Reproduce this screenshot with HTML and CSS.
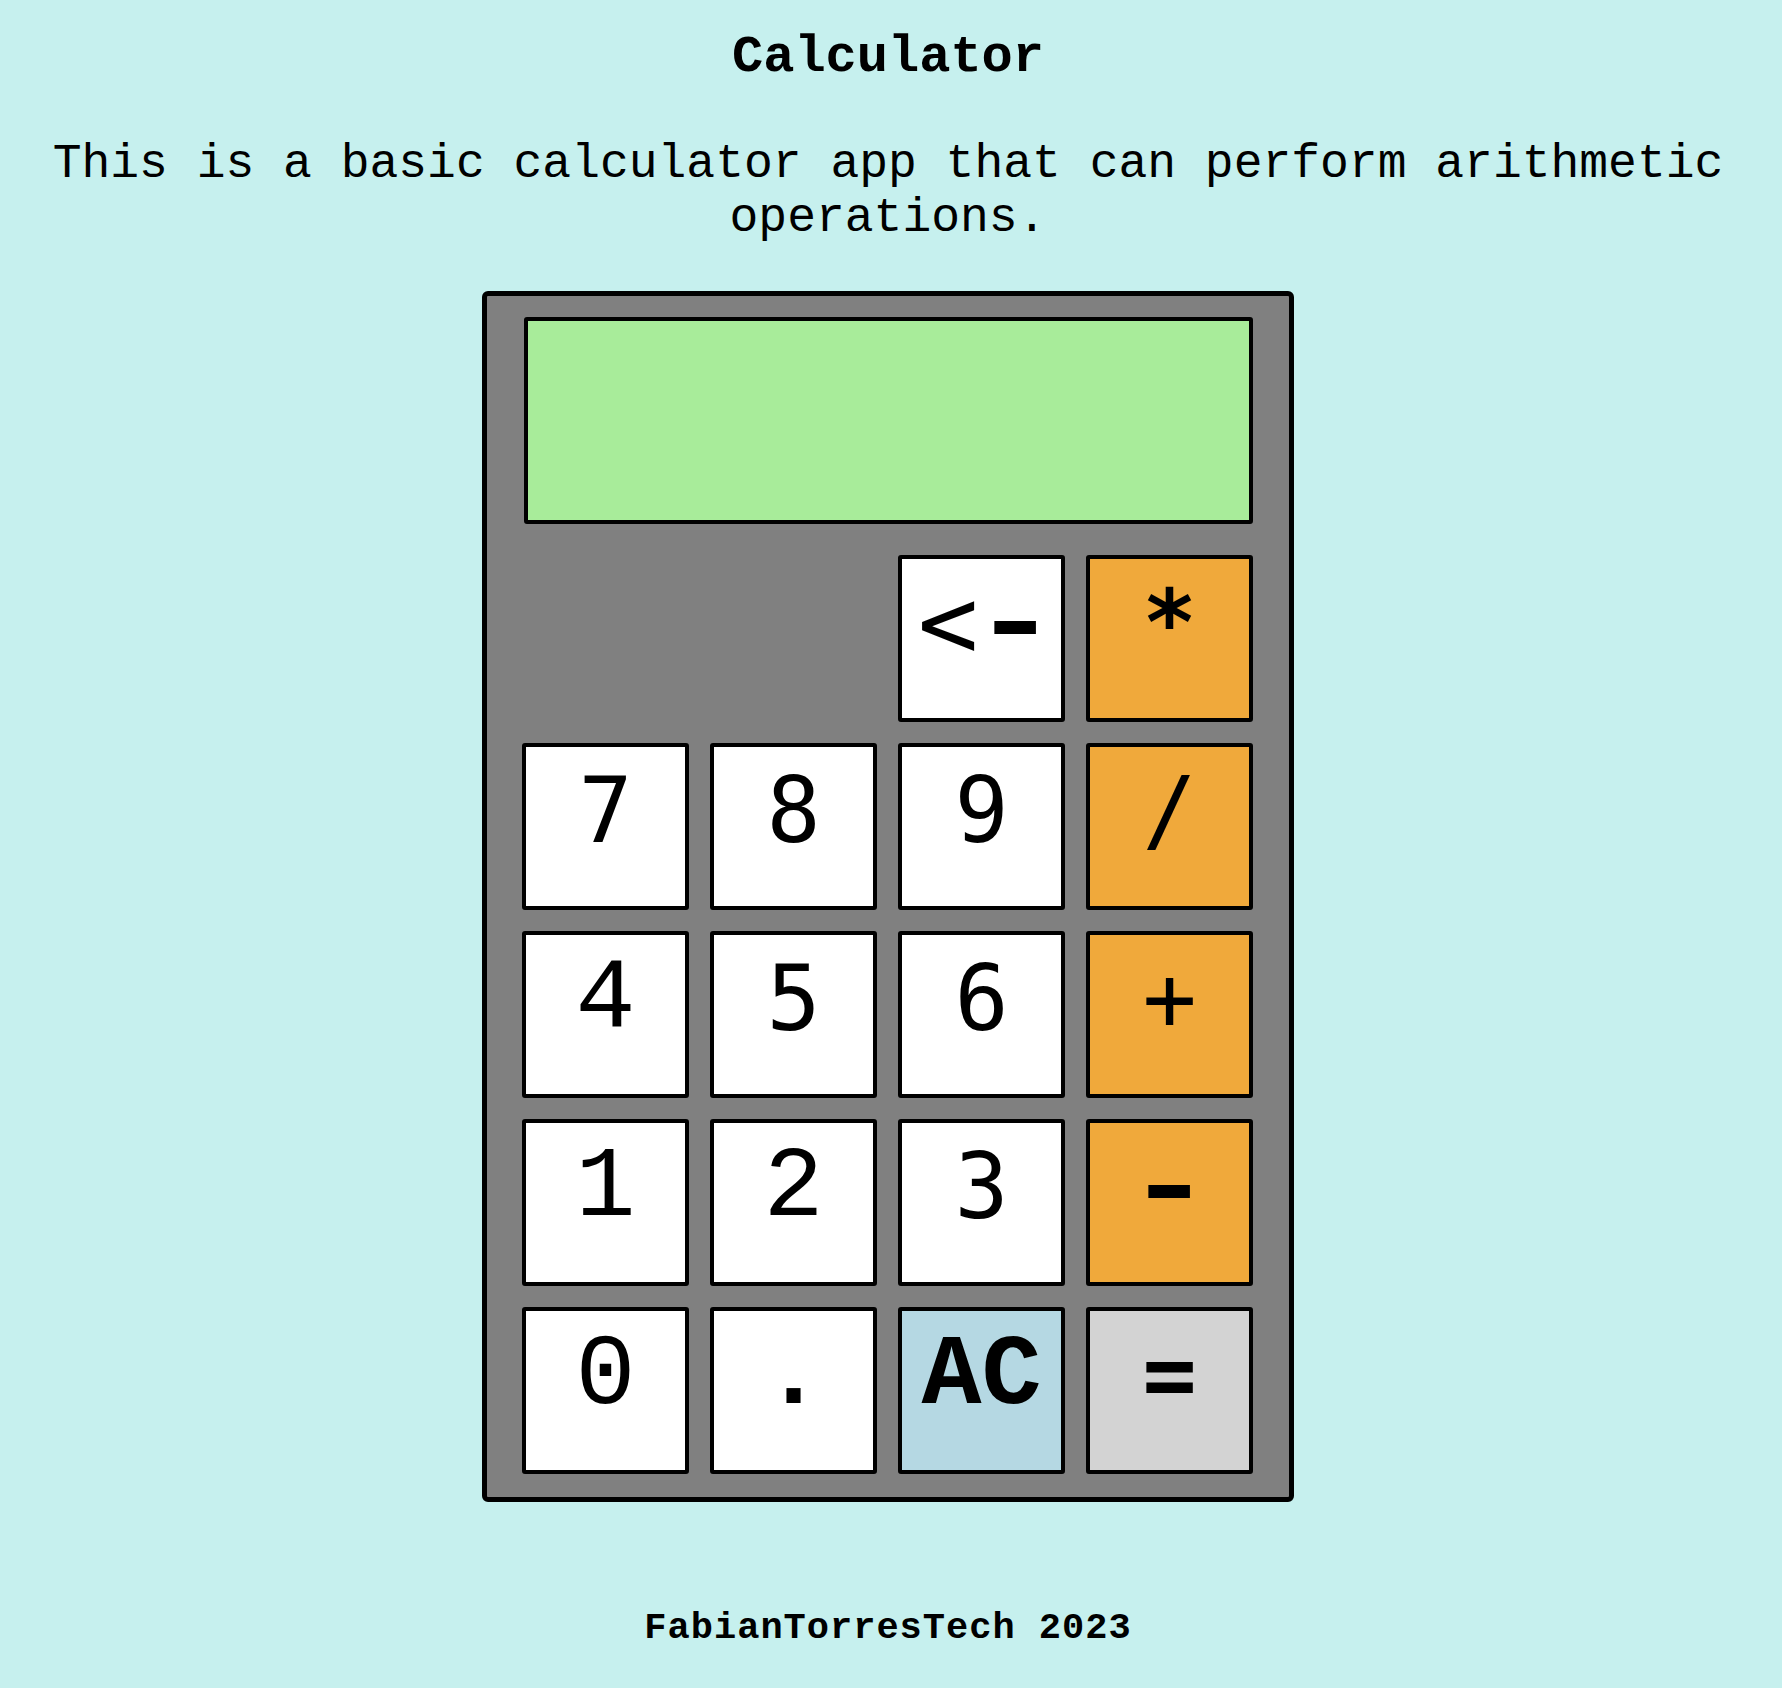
FILE: index.html
```html
<!DOCTYPE html>
<html lang="en">
<head>
<meta charset="utf-8">
<title>Calculator</title>
<link rel="stylesheet" href="styles.css">
</head>
<body>
<main class="page">
  <h1 class="title">Calculator</h1>
  <p class="intro">This is a basic calculator app that can perform arithmetic operations.</p>
  <div class="calc">
    <div class="display"></div>
    <div class="keys">
      <div class="blank"></div>
      <div class="blank"></div>
      <button class="key sans back"><span class="lt">&lt;</span><span class="bar">-</span></button>
      <button class="key sans op star">*</button>
      <button class="key sans">7</button>
      <button class="key sans">8</button>
      <button class="key sans">9</button>
      <button class="key sans op">/</button>
      <button class="key serif">4</button>
      <button class="key sans">5</button>
      <button class="key sans">6</button>
      <button class="key sans op">+</button>
      <button class="key serif">1</button>
      <button class="key serif">2</button>
      <button class="key sans">3</button>
      <button class="key sans op"><span class="bar">-</span></button>
      <button class="key serif">0</button>
      <button class="key serif dot">.</button>
      <button class="key serif clear">AC</button>
      <button class="key sans equals">=</button>
    </div>
  </div>
  <footer class="credit">FabianTorresTech 2023</footer>
</main>
</body>
</html>
```

FILE: styles.css
```css
html, body {
  margin: 0;
  padding: 0;
  background: #c6f0ee;
}

body {
  min-height: 1688px;
  font-family: "Liberation Mono", "Courier New", monospace;
  color: #000;
}

.page {
  display: flex;
  flex-direction: column;
  align-items: center;
  padding: 28px 14px 0 8px;
}

.title {
  margin: 0;
  font-size: 52px;
  line-height: 60px;
  font-weight: bold;
  text-align: center;
}

.intro {
  margin: 49px 0 0;
  font-size: 48px;
  line-height: 54px;
  text-align: center;
}

.calc {
  margin-top: 46px;
  background: #808080;
  border: 5px solid #000;
  border-radius: 6px;
  padding: 21px 36px 23px 35px;
}

.display {
  box-sizing: border-box;
  width: 729px;
  height: 207px;
  margin: 0 0 31px 2px;
  background: #a8ec9a;
  border: 4px solid #000;
  border-radius: 3px;
}

.keys {
  display: grid;
  grid-template-columns: repeat(4, 167px);
  grid-auto-rows: 167px;
  gap: 21px;
}

.key {
  box-sizing: border-box;
  margin: 0;
  display: flex;
  justify-content: center;
  align-items: flex-start;
  background: #fff;
  border: 4px solid #000;
  border-radius: 3px;
  color: #000;
  line-height: 1;
  cursor: pointer;
}

.sans {
  font-family: "DejaVu Sans Mono", monospace;
  font-size: 90px;
  padding: 19px 0 0;
}

.serif {
  font-family: "Liberation Mono", "Courier New", monospace;
  font-size: 100px;
  padding: 16px 0 0;
}

.op {
  background: #f0a93b;
}

.star {
  font-weight: bold;
}

.back .lt {
  display: inline-block;
  transform: scale(1.12);
}

.bar {
  display: inline-block;
  font-weight: bold;
  transform: scaleX(1.5);
}

.back .bar {
  margin-left: 12px;
}

.dot {
  font-weight: bold;
}

.clear {
  background: #b5d8e3;
  font-weight: bold;
}

.equals {
  background: #d3d3d3;
  font-weight: bold;
}

.credit {
  margin-top: 106px;
  font-size: 37px;
  line-height: 40px;
  letter-spacing: 1px;
  font-weight: bold;
  text-align: center;
}
```
